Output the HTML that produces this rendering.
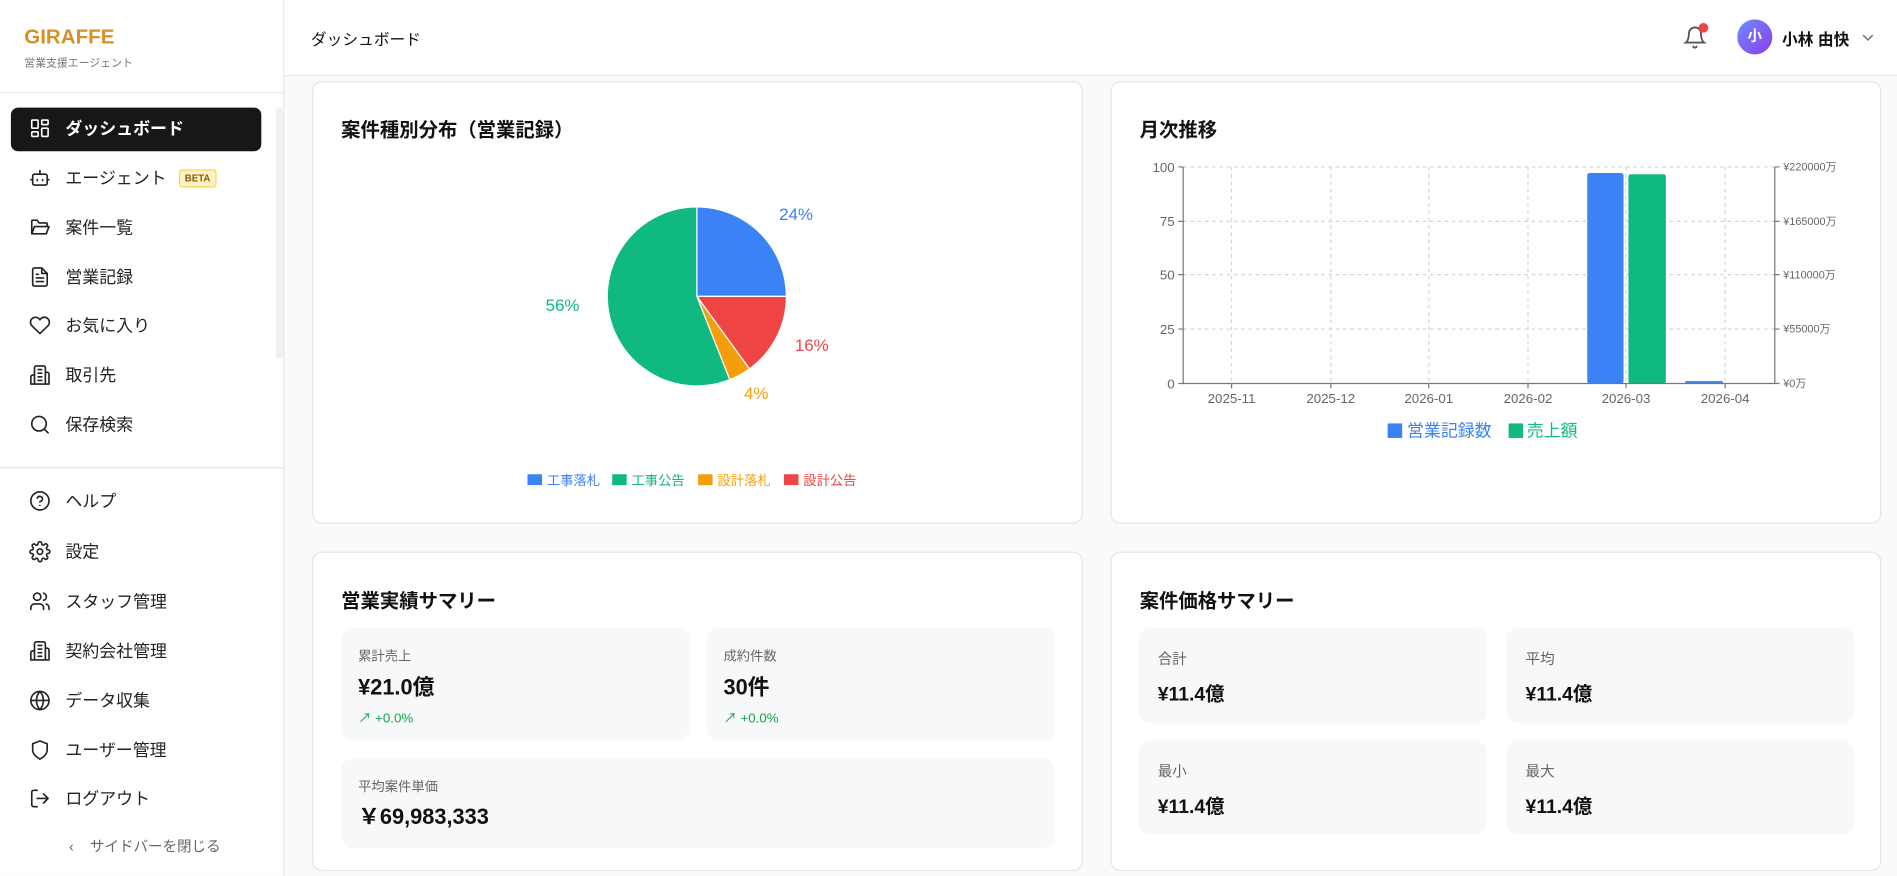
<!DOCTYPE html>
<html><head><meta charset="utf-8"><style>
*{margin:0;padding:0;box-sizing:border-box}
html,body{width:1897px;height:876px;overflow:hidden;background:#fff}
body{font-family:"Liberation Sans","Noto Sans CJK JP",sans-serif;color:#111}
#w{position:absolute;left:0;top:0;width:1568px;height:724px;transform:scale(1.2098);transform-origin:0 0;background:#f9fafb}
.a{position:absolute}
.side{left:0;top:0;width:235px;height:724px;background:#fff;border-right:1px solid #e5e7eb}
.nav{position:absolute;left:24px;font-size:14px;color:#222;display:flex;align-items:center;height:20px}
.nav svg{width:18px;height:18px;margin-right:12px;fill:none;stroke:#222;stroke-width:1.8;stroke-linecap:round;stroke-linejoin:round}
.card{position:absolute;background:#fff;border:1px solid #e3e5e8;border-radius:8px}
.ct{position:absolute;left:23px;font-size:16px;font-weight:bold}
.box{position:absolute;background:#f7f8fa;border-radius:10px}
.lb{position:absolute;font-size:11px;color:#666}
.vl{position:absolute;font-size:18px;font-weight:bold}
.tr{position:absolute;font-size:11px;color:#16a34a}
</style></head><body><div id="w">
<div class="a side">
<div class="a" style="left:20px;top:21px;font-size:17px;font-weight:bold;color:#d4912a">GIRAFFE</div>
<div class="a" style="left:20px;top:45px;font-size:9px;color:#777">営業支援エージェント</div>
<div class="a" style="left:0;top:76px;width:235px;border-top:1px solid #e5e7eb"></div>
<div class="a" style="left:228px;top:89px;width:6px;height:208px;background:#f1f1f1;border-radius:3px"></div>
<div class="a" style="left:9px;top:89px;width:207px;height:36px;background:#171717;border-radius:6px"></div>
<div class="nav" style="top:96px;color:#fff;font-weight:bold"><svg viewBox="0 0 24 24" style="stroke:#fff"><rect x="3" y="3" width="7" height="9" rx="1"/><rect x="14" y="3" width="7" height="5" rx="1"/><rect x="14" y="12" width="7" height="9" rx="1"/><rect x="3" y="16" width="7" height="5" rx="1"/></svg>ダッシュボード</div>
<div class="nav" style="top:137px"><svg viewBox="0 0 24 24"><rect x="4" y="8" width="16" height="12" rx="2"/><path d="M12 8V4M9 14v1M15 14v1M2 14h2M20 14h2"/></svg>エージェント<span style="margin-left:10px;font-size:8px;font-weight:bold;color:#8a5a00;background:#fef3c7;border:1px solid #fcd34d;border-radius:3px;padding:2px 4px">BETA</span></div>
<div class="nav" style="top:178px"><svg viewBox="0 0 24 24"><path d="M3 19V5a1 1 0 011-1h5l2 3h8a1 1 0 011 1v2M3 19l3-8h16l-3 8z"/></svg>案件一覧</div>
<div class="nav" style="top:219px"><svg viewBox="0 0 24 24"><path d="M14 2H6a2 2 0 00-2 2v16a2 2 0 002 2h12a2 2 0 002-2V8z"/><path d="M14 2v6h6M8 13h8M8 17h8M8 9h2"/></svg>営業記録</div>
<div class="nav" style="top:259px"><svg viewBox="0 0 24 24"><path d="M20.8 4.6a5.5 5.5 0 00-7.8 0L12 5.7l-1-1.1a5.5 5.5 0 00-7.8 7.8L12 21l8.8-8.6a5.5 5.5 0 000-7.8z"/></svg>お気に入り</div>
<div class="nav" style="top:300px"><svg viewBox="0 0 24 24"><path d="M6 22V4a2 2 0 012-2h8a2 2 0 012 2v18zM6 12H4a2 2 0 00-2 2v8h4M18 9h2a2 2 0 012 2v11h-4M10 6h4M10 10h4M10 14h4M10 18h4"/></svg>取引先</div>
<div class="nav" style="top:341px"><svg viewBox="0 0 24 24"><circle cx="11" cy="11" r="8"/><path d="M21 21l-4.3-4.3"/></svg>保存検索</div>
<div class="a" style="left:0;top:386px;width:235px;border-top:1px solid #e5e7eb"></div>
<div class="nav" style="top:404px"><svg viewBox="0 0 24 24"><circle cx="12" cy="12" r="10"/><path d="M9.1 9a3 3 0 015.8 1c0 2-3 3-3 3M12 17h.01"/></svg>ヘルプ</div>
<div class="nav" style="top:446px"><svg viewBox="0 0 24 24"><circle cx="12" cy="12" r="3"/><path d="M19.4 15a1.7 1.7 0 00.3 1.8l.1.1a2 2 0 11-2.8 2.8l-.1-.1a1.7 1.7 0 00-1.8-.3 1.7 1.7 0 00-1 1.5V21a2 2 0 11-4 0v-.1a1.7 1.7 0 00-1.1-1.5 1.7 1.7 0 00-1.8.3l-.1.1a2 2 0 11-2.8-2.8l.1-.1a1.7 1.7 0 00.3-1.8 1.7 1.7 0 00-1.5-1H3a2 2 0 110-4h.1a1.7 1.7 0 001.5-1.1 1.7 1.7 0 00-.3-1.8l-.1-.1a2 2 0 112.8-2.8l.1.1a1.7 1.7 0 001.8.3H9a1.7 1.7 0 001-1.5V3a2 2 0 114 0v.1a1.7 1.7 0 001 1.5 1.7 1.7 0 001.8-.3l.1-.1a2 2 0 112.8 2.8l-.1.1a1.7 1.7 0 00-.3 1.8V9a1.7 1.7 0 001.5 1H21a2 2 0 110 4h-.1a1.7 1.7 0 00-1.5 1z"/></svg>設定</div>
<div class="nav" style="top:487px"><svg viewBox="0 0 24 24"><path d="M16 21v-2a4 4 0 00-4-4H6a4 4 0 00-4 4v2"/><circle cx="9" cy="7" r="4"/><path d="M22 21v-2a4 4 0 00-3-3.9M16 3.1a4 4 0 010 7.8"/></svg>スタッフ管理</div>
<div class="nav" style="top:528px"><svg viewBox="0 0 24 24"><path d="M6 22V4a2 2 0 012-2h8a2 2 0 012 2v18zM6 12H4a2 2 0 00-2 2v8h4M18 9h2a2 2 0 012 2v11h-4M10 6h4M10 10h4M10 14h4M10 18h4"/></svg>契約会社管理</div>
<div class="nav" style="top:569px"><svg viewBox="0 0 24 24"><circle cx="12" cy="12" r="10"/><path d="M2 12h20M12 2a15 15 0 010 20M12 2a15 15 0 000 20"/></svg>データ収集</div>
<div class="nav" style="top:610px"><svg viewBox="0 0 24 24"><path d="M12 22s8-4 8-10V5l-8-3-8 3v7c0 6 8 10 8 10z"/></svg>ユーザー管理</div>
<div class="nav" style="top:650px"><svg viewBox="0 0 24 24"><path d="M9 21H5a2 2 0 01-2-2V5a2 2 0 012-2h4M16 17l5-5-5-5M21 12H9"/></svg>ログアウト</div>
<div class="a" style="left:57px;top:691px;font-size:12px;color:#666">‹&nbsp;&nbsp;&nbsp;&nbsp;サイドバーを閉じる</div>
</div>
<div class="a" style="left:235px;top:0;width:1333px;height:63px;background:#fff;border-bottom:1px solid #e5e7eb"></div>
<div class="a" style="left:257px;top:22px;font-size:13px">ダッシュボード</div>
<svg class="a" style="left:1391px;top:20px" width="20" height="22" viewBox="0 0 24 24" fill="none" stroke="#555" stroke-width="1.8" stroke-linecap="round"><path d="M6 8a6 6 0 0112 0c0 7 3 9 3 9H3s3-2 3-9M10.3 21a1.9 1.9 0 003.4 0"/></svg>
<div class="a" style="left:1404px;top:19px;width:8px;height:8px;border-radius:50%;background:#ef4444"></div>
<div class="a" style="left:1436px;top:16px;width:29px;height:29px;border-radius:50%;background:linear-gradient(135deg,#6b8afd,#8b3fe8);color:#fff;font-size:12px;font-weight:bold;text-align:center;line-height:29px">小</div>
<div class="a" style="left:1473px;top:22px;font-size:13px;font-weight:bold">小林 由快</div>
<svg class="a" style="left:1538px;top:26px" width="12" height="10" viewBox="0 0 12 10" fill="none" stroke="#777" stroke-width="1.3"><path d="M2 3l4 4 4-4"/></svg>

<div class="card" style="left:258px;top:67px;width:637px;height:366px">
<div class="ct" style="top:26px">案件種別分布（営業記録）</div></div>
<svg class="a" style="left:258px;top:67px" width="637" height="366"><g transform="translate(-258,-67)">
<path d="M576 245L576 171A74 74 0 0 1 650 245Z" fill="#3b82f6" stroke="#fff"/>
<path d="M576 245L650 245A74 74 0 0 1 619.5 304.9Z" fill="#ef4444" stroke="#fff"/>
<path d="M576 245L619.5 304.9A74 74 0 0 1 603.2 313.8Z" fill="#f59e0b" stroke="#fff"/>
<path d="M576 245L603.2 313.8A74 74 0 1 1 576 171Z" fill="#10b981" stroke="#fff"/>
<g font-size="14" font-family="Liberation Sans"><text x="644" y="182" fill="#3b82f6">24%</text><text x="657" y="290" fill="#ef4444">16%</text><text x="615" y="330" fill="#f59e0b">4%</text><text x="451" y="257" fill="#10b981">56%</text></g>
<g font-size="11" font-family="Liberation Sans,Noto Sans CJK JP"><rect x="436" y="392" width="12" height="9" fill="#3b82f6"/><text x="452" y="401" fill="#3b82f6">工事落札</text><rect x="506" y="392" width="12" height="9" fill="#10b981"/><text x="522" y="401" fill="#10b981">工事公告</text><rect x="577" y="392" width="12" height="9" fill="#f59e0b"/><text x="593" y="401" fill="#f59e0b">設計落札</text><rect x="648" y="392" width="12" height="9" fill="#ef4444"/><text x="664" y="401" fill="#ef4444">設計公告</text></g>
</g></svg>

<div class="card" style="left:918px;top:67px;width:637px;height:366px">
<div class="ct" style="top:26px">月次推移</div></div>
<svg class="a" style="left:918px;top:67px" width="637" height="366"><g transform="translate(-918,-67)" font-family="Liberation Sans,Noto Sans CJK JP">
<g stroke="#d4d4d4" stroke-dasharray="3 3" fill="none"><path d="M978 138H1467M978 183H1467M978 227H1467M978 272H1467"/><path d="M1018 138V317M1100 138V317M1181 138V317M1263 138V317M1344 138V317M1426 138V317"/></g>
<rect x="1312" y="143" width="30" height="174" rx="2" fill="#3b82f6"/>
<rect x="1346" y="144" width="31" height="173" rx="2" fill="#10b981"/>
<rect x="1393" y="315" width="31" height="2" fill="#3b82f6"/>
<g stroke="#777" fill="none"><path d="M978 138V317H1467V138M974 138H978M974 183H978M974 227H978M974 272H978M974 317H978M1467 138H1471M1467 183H1471M1467 227H1471M1467 272H1471M1467 317H1471M1018 317V321M1100 317V321M1181 317V321M1263 317V321M1344 317V321M1426 317V321"/></g>
<g font-size="11" fill="#666" text-anchor="end"><text x="971" y="142">100</text><text x="971" y="187">75</text><text x="971" y="231">50</text><text x="971" y="276">25</text><text x="971" y="321">0</text></g>
<g font-size="9" fill="#666"><text x="1474" y="141">¥220000万</text><text x="1474" y="186">¥165000万</text><text x="1474" y="230">¥110000万</text><text x="1474" y="275">¥55000万</text><text x="1474" y="320">¥0万</text></g>
<g font-size="11" fill="#666" text-anchor="middle"><text x="1018" y="333">2025-11</text><text x="1100" y="333">2025-12</text><text x="1181" y="333">2026-01</text><text x="1263" y="333">2026-02</text><text x="1344" y="333">2026-03</text><text x="1426" y="333">2026-04</text></g>
<rect x="1147" y="350" width="12" height="12" fill="#3b82f6"/><text x="1163" y="361" font-size="14" fill="#3b82f6">営業記録数</text>
<rect x="1247" y="350" width="12" height="12" fill="#10b981"/><text x="1262" y="361" font-size="14" fill="#10b981">売上額</text>
</g></svg>

<div class="card" style="left:258px;top:456px;width:637px;height:264px">
<div class="ct" style="top:26px">営業実績サマリー</div>
<div class="box" style="left:23px;top:62px;width:288px;height:93px"><div class="lb" style="left:14px;top:15px">累計売上</div><div class="vl" style="left:14px;top:35px">¥21.0億</div><div class="tr" style="left:14px;top:66px">↗ +0.0%</div></div>
<div class="box" style="left:325px;top:62px;width:288px;height:93px"><div class="lb" style="left:14px;top:15px">成約件数</div><div class="vl" style="left:14px;top:35px">30件</div><div class="tr" style="left:14px;top:66px">↗ +0.0%</div></div>
<div class="box" style="left:23px;top:170px;width:590px;height:74px"><div class="lb" style="left:14px;top:15px">平均案件単価</div><div class="vl" style="left:14px;top:34px">￥69,983,333</div></div>
</div>
<div class="card" style="left:918px;top:456px;width:637px;height:264px">
<div class="ct" style="top:26px">案件価格サマリー</div>
<div class="box" style="left:22px;top:62px;width:288px;height:79px"><div class="lb" style="left:16px;top:17px;font-size:12px">合計</div><div class="vl" style="left:16px;top:41px;font-size:16px">¥11.4億</div></div>
<div class="box" style="left:326px;top:62px;width:288px;height:79px"><div class="lb" style="left:16px;top:17px;font-size:12px">平均</div><div class="vl" style="left:16px;top:41px;font-size:16px">¥11.4億</div></div>
<div class="box" style="left:22px;top:155px;width:288px;height:78px"><div class="lb" style="left:16px;top:17px;font-size:12px">最小</div><div class="vl" style="left:16px;top:41px;font-size:16px">¥11.4億</div></div>
<div class="box" style="left:326px;top:155px;width:288px;height:78px"><div class="lb" style="left:16px;top:17px;font-size:12px">最大</div><div class="vl" style="left:16px;top:41px;font-size:16px">¥11.4億</div></div>
</div>
</div></body></html>
